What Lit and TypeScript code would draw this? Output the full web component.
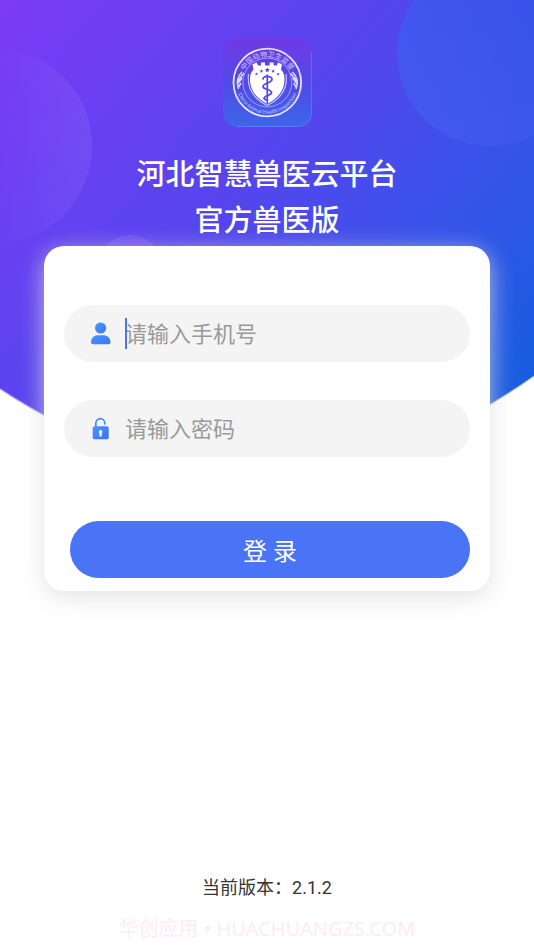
import { LitElement, html, css, svg } from "lit";
import { customElement } from "lit/decorators.js";

@customElement("login-backdrop")
class LoginBackdrop extends LitElement {
  static styles = css`
    :host {
      display: block;
    }
    .art {
      display: block;
      width: 100%;
      height: auto;
    }
  `;

  render() {
    return html`
      <svg class="art" viewBox="0 0 534 480" aria-hidden="true">
        <defs>
          <linearGradient id="sky" gradientUnits="userSpaceOnUse" x1="0" y1="0" x2="501" y2="416">
            <stop offset="0" stop-color="#7c3af7" />
            <stop offset="0.5" stop-color="#5246ed" />
            <stop offset="0.75" stop-color="#3654e8" />
            <stop offset="1" stop-color="#175de0" />
          </linearGradient>
          <linearGradient id="left" x1="0" y1="0.5" x2="1" y2="0.5">
            <stop offset="0.5" stop-color="#fff" stop-opacity="0" />
            <stop offset="1" stop-color="#fff" stop-opacity="0.07" />
          </linearGradient>
          <linearGradient id="right" x1="0.1" y1="0.8" x2="0.8" y2="0.3">
            <stop offset="0" stop-color="#435bee" stop-opacity="0.8" />
            <stop offset="1" stop-color="#3356e8" stop-opacity="0.7" />
          </linearGradient>
          <clipPath id="bowl">
            <path d="M0 0H534V376Q267 564 0 389Z" />
          </clipPath>
        </defs>
        <g clip-path="url(#bowl)">
          <rect width="534" height="480" fill="url(#sky)" />
          <circle cx="-6" cy="146" r="98" fill="url(#left)" />
          <circle cx="490" cy="53" r="93" fill="url(#right)" />
          <circle cx="130" cy="268" r="33" fill="#a070ff" fill-opacity="0.28" />
        </g>
        <path d="M534 376Q267 564 0 389" fill="none" stroke="#b9b4fa" stroke-opacity="0.6" stroke-width="1.5" />
      </svg>
    `;
  }
}

@customElement("app-emblem")
class AppEmblem extends LitElement {
  static styles = css`
    :host {
      display: block;
      width: 89px;
      height: 89px;
    }
    .emblem {
      display: block;
      width: 100%;
      height: 100%;
    }
    .legend {
      font-family: "Noto Sans CJK SC", sans-serif;
      font-weight: 500;
      fill: #bdb6fb;
    }
    .cn {
      font-size: 7px;
    }
    .en {
      font-size: 5px;
    }
  `;

  private star(x: number, y: number, r: number) {
    const points = Array.from({ length: 10 }, (_, i) => {
      const a = (Math.PI / 5) * i - Math.PI / 2;
      const d = i % 2 ? r * 0.42 : r;
      return `${(x + d * Math.cos(a)).toFixed(2)},${(y + d * Math.sin(a)).toFixed(2)}`;
    }).join(" ");
    return svg`<polygon points=${points} fill="#5446e6" />`;
  }

  render() {
    return html`
      <svg class="emblem" viewBox="0 0 89 89" role="img" aria-label="中国动物卫生监督">
        <defs>
          <linearGradient id="tile" x1="0" y1="0" x2="0" y2="1">
            <stop offset="0" stop-color="#7039e4" />
            <stop offset="0.5" stop-color="#5249e7" />
            <stop offset="1" stop-color="#3c66ea" />
          </linearGradient>
          <path id="arc-top" d="M18.500 44.500A25.800 25.800 0 0 1 70.100 44.500" />
          <path id="arc-bottom" d="M13 44.500A31.300 31.300 0 0 0 75.600 44.500" />
        </defs>
        <rect width="89" height="89" rx="15" fill="url(#tile)" />
        <path d="M88.500 14V74Q88.500 88.500 74 88.500H14" fill="none" stroke="#7f9df5" stroke-opacity="0.5" stroke-width="0.8" />
        <circle cx="44.300" cy="44.500" r="33.800" fill="none" stroke="#e4e2ff" stroke-width="1.800" />
        <circle cx="44.300" cy="44.500" r="24.400" fill="none" stroke="#a8a4fb" stroke-width="0.900" />
        <text class="legend cn">
          <textPath href="#arc-top" startOffset="50%" text-anchor="middle">中国动物卫生监督</textPath>
        </text>
        <text class="legend en">
          <textPath href="#arc-bottom" startOffset="50%" text-anchor="middle">China Animal Health Inspection</textPath>
        </text>
        <g fill="none" stroke="#dcd9ff" stroke-width="1.500">
          <path d="M19 34Q12 41 15.500 51M21 35L15 43M19 40L14.500 46M18 45L15 50" />
          <path d="M69.600 34Q76.600 41 73.100 51M67.600 35L73.600 43M69.600 40L74.100 46M70.600 45L73.600 50" />
        </g>
        <path d="M25.500 36Q23 57 44.300 67.500Q65.600 57 63.100 36" fill="none" stroke="#c9c6ff" stroke-width="1.200" />
        <path
          d="M29.500 26.500L33.500 24.500L35 27.500H38V24.500H42V27.500H46.600V24.500H50.600V27.500H53.600L55 24.500L59 26.500L58 31.500Q61.500 35 61.500 41C61.500 53 54.500 60.500 44.300 66C34 60.500 27 53 27 41Q27 35 30.500 31.500Z"
          fill="#fff"
        />
        ${this.star(33.5, 36, 1.8)}${this.star(38.5, 33.2, 2)}${this.star(44.3, 32, 2.8)}
        ${this.star(50.1, 33.2, 2)}${this.star(55.1, 36, 1.8)}
        <g fill="none" stroke="#5446e6" stroke-width="1.700" stroke-linecap="round">
          <path d="M44.300 37V65" />
          <path d="M40 41C40 37 49 38 49 41.500C49 45 40 45 40 48.500C40 52 48.500 51 48.500 54.500C48.500 58 41 57 41 60.500Q42 62 44.300 62" />
        </g>
      </svg>
    `;
  }
}

@customElement("app-root")
class AppRoot extends LitElement {
  static styles = css`
    :host {
      display: block;
      font-family: Roboto, "Noto Sans CJK SC", sans-serif;
      color: #333;
    }
    * {
      box-sizing: border-box;
    }
    .page {
      display: grid;
      grid-template-columns: minmax(0, 1fr);
      min-height: 100vh;
      overflow: hidden;
      background: #fff;
    }
    .backdrop,
    .content {
      grid-area: 1 / 1;
    }
    .backdrop {
      align-self: start;
    }
    .content {
      z-index: 1;
      display: flex;
      flex-direction: column;
      align-items: center;
      padding: 38px 44px 7px;
    }
    .title {
      margin: 25px 0 2px;
      font-size: 29px;
      line-height: 46px;
      font-weight: 500;
      color: #fff;
      text-align: center;
    }
    .line {
      display: block;
    }
    .card {
      display: flex;
      flex-direction: column;
      width: 100%;
      padding: 59px 20px 13px;
      border-radius: 20px;
      background: #fff;
      box-shadow: 0 6px 24px rgba(220, 220, 220, 0.8);
    }
    .field {
      display: flex;
      align-items: center;
      height: 57px;
      margin-bottom: 38px;
      padding: 0 28px 0 26px;
      border-radius: 29px;
      background: #f4f4f4;
    }
    .icon {
      flex: none;
      width: 22px;
      height: 24px;
      margin-right: 13px;
    }
    .entry {
      position: relative;
      display: flex;
      flex: 1;
      min-width: 0;
    }
    .entry.active::before {
      content: "";
      position: absolute;
      left: 0;
      top: 0;
      width: 2px;
      height: 100%;
      background: #4a73f5;
    }
    .input {
      width: 100%;
      height: 31px;
      padding: 2px 0 0;
      border: 0;
      outline: 0;
      background: transparent;
      font: inherit;
      font-size: 22px;
      color: #333;
      caret-color: #4a73f5;
    }
    .input::placeholder {
      color: #999;
      opacity: 1;
    }
    .submit {
      height: 57px;
      margin: 26px 0 0 6px;
      padding: 0;
      border: 0;
      border-radius: 29px;
      background: #4a74f6;
      font: inherit;
      font-size: 24px;
      color: #fff;
      cursor: pointer;
    }
    .version {
      margin: auto 0 15px;
      font-size: 18px;
      line-height: 24px;
    }
    .credit {
      margin: 0;
      font-family: "Noto Sans", "Noto Sans CJK SC", sans-serif;
      font-size: 20px;
      line-height: 28px;
      color: #fdebfc;
      white-space: nowrap;
    }
  `;

  render() {
    return html`
      <div class="page">
        <login-backdrop class="backdrop"></login-backdrop>
        <main class="content">
          <app-emblem></app-emblem>
          <h1 class="title" lang="zh-CN">
            <span class="line">河北智慧兽医云平台</span>
            <span class="line">官方兽医版</span>
          </h1>
          <form class="card" @submit=${(e: Event) => e.preventDefault()}>
            <label class="field">
              <svg class="icon" viewBox="0 0 22 24" aria-hidden="true">
                <defs>
                  <linearGradient id="person" x1="0" y1="0" x2="1" y2="1">
                    <stop offset="0" stop-color="#4399ff" />
                    <stop offset="1" stop-color="#3f74fa" />
                  </linearGradient>
                </defs>
                <circle cx="10.600" cy="6" r="5.600" fill="url(#person)" />
                <path d="M1 20.500C1 16 4 13.300 8 13.300H13C17.500 13.300 20.500 16 20.500 20.500Q20.500 22.300 18.700 22.300H2.800Q1 22.300 1 20.500Z" fill="url(#person)" />
              </svg>
              <span class="entry active">
                <input class="input" type="tel" name="phone" placeholder="请输入手机号" aria-label="手机号" />
              </span>
            </label>
            <label class="field">
              <svg class="icon" viewBox="0 0 22 24" aria-hidden="true">
                <defs>
                  <linearGradient id="lock" x1="0" y1="0" x2="1" y2="1">
                    <stop offset="0" stop-color="#4399ff" />
                    <stop offset="1" stop-color="#3f6cfa" />
                  </linearGradient>
                </defs>
                <path d="M5.800 10V6.200A4.500 4.500 0 0 1 14.800 6.200V7" fill="none" stroke="#438cff" stroke-width="1.700" stroke-linecap="round" />
                <rect x="2.700" y="9.300" width="16" height="13" rx="1.800" fill="url(#lock)" />
                <path d="M10.600 13.200A1.600 1.600 0 0 1 11.500 16.100V18.500A0.900 0.900 0 0 1 9.700 18.500V16.100A1.600 1.600 0 0 1 10.600 13.200Z" fill="#fff" stroke="#fff" stroke-width="0.500" />
              </svg>
              <span class="entry">
                <input class="input" type="password" name="password" placeholder="请输入密码" aria-label="密码" />
              </span>
            </label>
            <button class="submit" type="submit">登 录</button>
          </form>
          <p class="version">当前版本：2.1.2</p>
          <p class="credit">华创应用 • HUACHUANGZS.COM</p>
        </main>
      </div>
    `;
  }
}
